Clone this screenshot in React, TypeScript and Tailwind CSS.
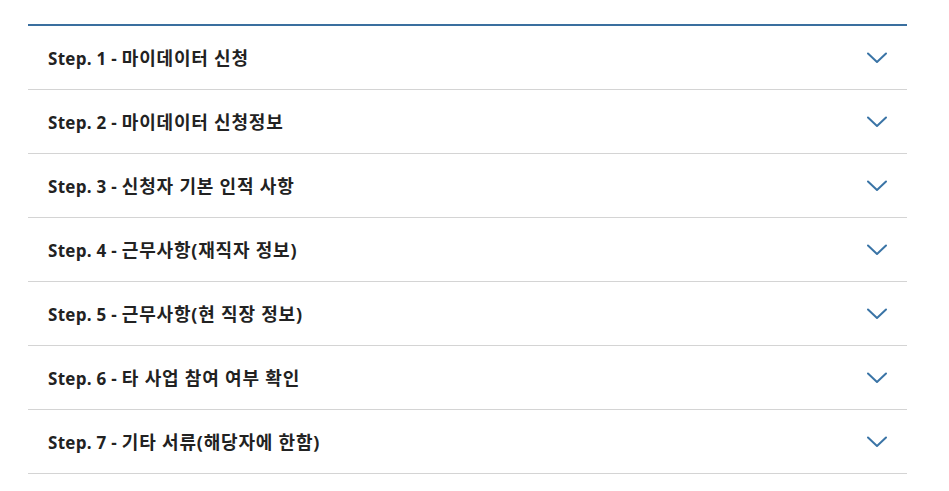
import React from 'react';

const steps = [
  { no: 1, title: '마이데이터 신청' },
  { no: 2, title: '마이데이터 신청정보' },
  { no: 3, title: '신청자 기본 인적 사항' },
  { no: 4, title: '근무사항(재직자 정보)' },
  { no: 5, title: '근무사항(현 직장 정보)' },
  { no: 6, title: '타 사업 참여 여부 확인' },
  { no: 7, title: '기타 서류(해당자에 한함)' },
];

const Chevron = () => (
  <svg width="20" height="12" viewBox="0 0 20 12" fill="none">
    <path d="M1 1.5 L10 10 L19 1.5" stroke="#3a74a6" strokeWidth="2" strokeLinecap="round" strokeLinejoin="round" />
  </svg>
);

export default function App() {
  return (
    <div className="w-[949px] h-[491px] bg-white pt-6 pl-7" style={{ fontFamily: '"Open Sans", "Noto Sans CJK KR", sans-serif' }}>
      <div className="w-[879px] border-t-2 border-[#3a6f9f]">
        {steps.map((s) => (
          <div key={s.no} className="flex items-center justify-between h-16 pl-5 pr-5 border-b border-[#d4d4d4]">
            <span className="font-bold text-[#222] whitespace-pre pt-0.5">
              <span className="text-[17px] tracking-[0.3px]">{`Step. ${s.no} - `}</span>
              <span className="text-[18px] tracking-[0.8px]">{s.title}</span>
            </span>
            <Chevron />
          </div>
        ))}
      </div>
    </div>
  );
}
